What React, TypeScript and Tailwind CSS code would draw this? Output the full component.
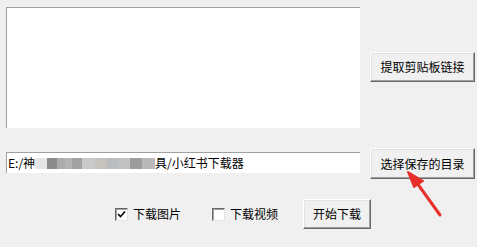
import React from "react";

const font = { fontFamily: '"Noto Sans CJK SC", "Noto Sans", sans-serif' };

function WinButton({ label, w, h }: { label: string; w: string; h: string }) {
  return (
    <div
      className={`${w} ${h} flex items-center justify-center bg-[#f0f0f0] border border-t-[#ffffff] border-l-[#ffffff] border-b-[#696969] border-r-[#696969] shadow-[inset_-1px_-1px_0_#a0a0a0,inset_1px_1px_0_#e3e3e3] text-[12px] text-black leading-none shrink-0`}
    >
      {label}
    </div>
  );
}

function Check({ checked, label }: { checked: boolean; label: string }) {
  return (
    <div className="flex items-center">
      <div className="w-[13px] h-[13px] bg-white border border-t-[#696969] border-l-[#696969] border-b-[#e3e3e3] border-r-[#e3e3e3] shadow-[inset_1px_1px_0_#a0a0a0] flex items-center justify-center">
        {checked && (
          <svg width="9" height="9" viewBox="0 0 9 9">
            <path d="M1 4 L3.5 6.5 L8 1.5" fill="none" stroke="#000" strokeWidth="1.6" />
          </svg>
        )}
      </div>
      <span className="ml-[5px] text-[12px] text-black leading-none">{label}</span>
    </div>
  );
}

const blocks = [
  { w: 12, c: "#e6e6e6" },
  { w: 10, c: "#8c8c8c" },
  { w: 8, c: "#ababab" },
  { w: 7, c: "#b3b3b3" },
  { w: 10, c: "#a2a2a2" },
  { w: 13, c: "#c9c9c9" },
  { w: 12, c: "#c6c2bd" },
  { w: 11, c: "#b9bcc0" },
  { w: 12, c: "#c2c2c2" },
  { w: 12, c: "#9d9d9d" },
  { w: 13, c: "#b9b9b9" },
];

export default function App() {
  return (
    <div className="relative w-[477px] h-[247px] bg-[#f0f0f0] overflow-hidden" style={font}>
      <div className="flex pt-[7px] pl-[6px]">
        <div className="w-[354px] h-[121px] bg-white border-t border-l border-[#a0a0a0]" />
        <div className="ml-[10px] mt-[45px]">
          <WinButton label="提取剪贴板链接" w="w-[105px]" h="h-[30px]" />
        </div>
      </div>

      <div className="flex pl-[6px] mt-[20px]">
        <div className="w-[354px] h-[21px] mt-[4px] bg-white border-t border-l border-[#a0a0a0] flex items-center pl-[1px] text-[12px] text-black leading-none whitespace-nowrap">
          <span>E:/神</span>
          <span className="flex h-[11px]">
            {blocks.map((b, i) => (
              <span key={i} style={{ width: b.w, backgroundColor: b.c }} className="block h-full" />
            ))}
          </span>
          <span>具/小红书下载器</span>
        </div>
        <div className="ml-[10px]">
          <WinButton label="选择保存的目录" w="w-[105px]" h="h-[31px]" />
        </div>
      </div>

      <div className="flex items-center mt-[20px] pl-[115px]">
        <Check checked label="下载图片" />
        <div className="ml-[31px]">
          <Check checked={false} label="下载视频" />
        </div>
        <div className="ml-[25px]">
          <WinButton label="开始下载" w="w-[68px]" h="h-[30px]" />
        </div>
      </div>

      <svg className="absolute left-0 top-0 pointer-events-none" width="477" height="247" viewBox="0 0 477 247">
        <path d="M440 215 L417 183" stroke="#e8302a" strokeWidth="3" strokeLinecap="round" fill="none" />
        <path d="M408 172 L423 181 L414 187 Z" fill="#e8302a" stroke="#e8302a" strokeWidth="2" strokeLinejoin="round" />
      </svg>
    </div>
  );
}
